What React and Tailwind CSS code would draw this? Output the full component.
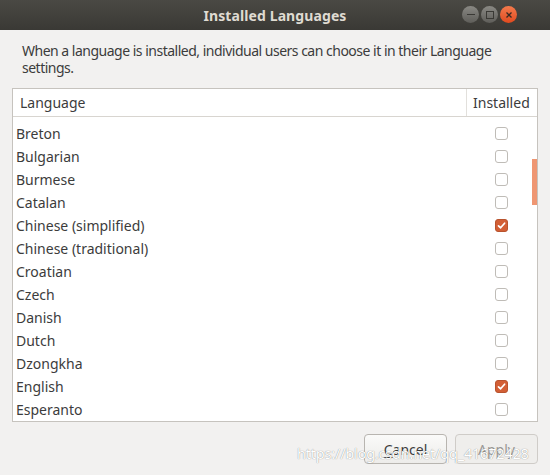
const languages = [
  { name: 'Breton', installed: false },
  { name: 'Bulgarian', installed: false },
  { name: 'Burmese', installed: false },
  { name: 'Catalan', installed: false },
  { name: 'Chinese (simplified)', installed: true },
  { name: 'Chinese (traditional)', installed: false },
  { name: 'Croatian', installed: false },
  { name: 'Czech', installed: false },
  { name: 'Danish', installed: false },
  { name: 'Dutch', installed: false },
  { name: 'Dzongkha', installed: false },
  { name: 'English', installed: true },
  { name: 'Esperanto', installed: false },
];

function Check({ on }) {
  if (on) {
    return (
      <span className="w-[13px] h-[13px] rounded-[3px] bg-[#d35f35] border border-[#b8532e] flex items-center justify-center">
        <svg width="9" height="9" viewBox="0 0 9 9" fill="none">
          <path d="M1.5 4.8 L3.6 6.8 L7.6 2.2" stroke="#fff" strokeWidth="1.7" strokeLinecap="round" strokeLinejoin="round" />
        </svg>
      </span>
    );
  }
  return <span className="w-[13px] h-[13px] rounded-[3px] bg-white border border-[#bfbcb7]" />;
}

export default function App() {
  return (
    <div className="w-[550px] h-[475px] bg-[#f2f1f0] flex flex-col overflow-hidden text-[#3c3c3c]" style={{ fontFamily: '"Noto Sans", "Open Sans", sans-serif' }}>
      <div className="h-[30px] bg-gradient-to-b from-[#4a4944] to-[#3a3935] flex items-center relative shrink-0">
        <div className="flex-1 text-center text-[#dfdbd2] font-bold text-[14px] tracking-[0.1px]">Installed Languages</div>
        <div className="absolute right-[33px] top-[6px] flex gap-[2px]">
          <span className="w-[17px] h-[17px] rounded-full bg-gradient-to-b from-[#8a8984] to-[#5e5d59] flex items-center justify-center">
            <span className="w-[8px] h-[1.5px] bg-[#3a3935]" />
          </span>
          <span className="w-[17px] h-[17px] rounded-full bg-gradient-to-b from-[#8a8984] to-[#5e5d59] flex items-center justify-center">
            <span className="w-[8px] h-[8px] border border-[#3a3935]" />
          </span>
          <span className="w-[17px] h-[17px] rounded-full bg-gradient-to-b from-[#f37a4c] to-[#e0491d] flex items-center justify-center">
            <svg width="8" height="8" viewBox="0 0 8 8"><path d="M1.5 1.5 L6.5 6.5 M6.5 1.5 L1.5 6.5" stroke="#3a2a22" strokeWidth="1.3" /></svg>
          </span>
        </div>
      </div>

      <div className="flex flex-col px-[12px] pt-[12px]">
        <p className="px-[10px] text-[14px] leading-[17px] tracking-[-0.5px]">
          When a language is installed, individual users can choose it in their Language settings.
        </p>
        <div className="mt-[12px] h-[334px] border border-[#c6c3be] bg-white flex flex-col relative overflow-hidden">
          <div className="h-[28px] flex border-b border-[#d8d5d0] text-[14px] shrink-0">
            <div className="flex-1 flex items-center pl-[7px]">Language</div>
            <div className="w-[71px] flex items-center pl-[6px] border-l border-[#e2e0dc]">Installed</div>
          </div>
          <div className="flex flex-col pt-[5px]">
            {languages.map((l) => (
              <div key={l.name} className="h-[23px] flex items-center text-[14px]">
                <div className="flex-1 pl-[3px]">{l.name}</div>
                <div className="w-[71px] flex justify-center">
                  <Check on={l.installed} />
                </div>
              </div>
            ))}
          </div>
          <div className="absolute right-[0px] top-[70px] w-[5px] h-[46px] bg-[#ef9672]" />
        </div>
      </div>

      <div className="flex justify-end gap-[8px] pr-[12px] pt-[12px] relative">
        <button className="w-[83px] h-[30px] rounded-[4px] border border-[#b8b5b0] bg-gradient-to-b from-[#fafaf9] to-[#edecea] text-[14px] text-[#3c3c3c]">
          <span className="underline decoration-1 underline-offset-2">C</span>ancel
        </button>
        <button className="w-[83px] h-[30px] rounded-[4px] border border-[#cfccc8] bg-[#efeeec] text-[14px] text-[#9a9895]">
          Apply
        </button>
        <div className="absolute left-[297px] top-[21px] whitespace-nowrap text-[14.5px] text-white tracking-[-0.2px] pointer-events-none" style={{ textShadow: '0 0 1px rgba(0,0,0,0.35), 0 0 1px rgba(0,0,0,0.2)' }}>
          https://blog.csdn.net/qq_41672428
        </div>
      </div>
    </div>
  );
}
